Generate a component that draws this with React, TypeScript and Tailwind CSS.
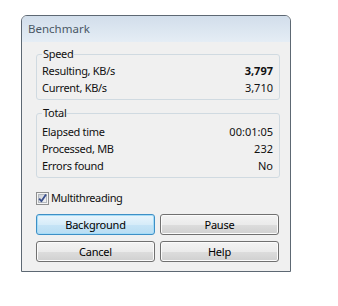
import type { ReactNode } from "react";

const font = { fontFamily: '"Noto Sans", "Open Sans", sans-serif' };

const Row = ({ label, value, bold }: { label: string; value: string; bold?: boolean }) => (
	<div className="flex items-center justify-between h-[17px]">
		<span className="tracking-[-0.3px]">{label}</span>
		<span className={bold ? "font-bold" : ""}>{value}</span>
	</div>
);

const Group = ({ title, children, className }: { title: string; children: ReactNode; className?: string }) => (
	<fieldset className={`border border-[#d0dae1] rounded-[3px] pl-[5px] pr-[6px] ${className ?? ""}`}>
		<legend className="px-[1px] leading-[16px] tracking-[-0.3px]">{title}</legend>
		{children}
	</fieldset>
);

const Button = ({ children, primary }: { children: ReactNode; primary?: boolean }) => (
	<button
		className={
			primary
				? "h-[21px] rounded-[3px] border border-[#3d8fc6] bg-[linear-gradient(#eaf5fc,#d6ecf9_50%,#c6e4f6_51%,#b9ddf3)] shadow-[inset_0_0_0_1px_#a6dcf7] text-black leading-none tracking-[-0.2px]"
				: "h-[21px] rounded-[3px] border border-[#707070] bg-[linear-gradient(#f3f3f3,#ebebeb_50%,#dddddd_51%,#d0d0d0)] shadow-[inset_0_0_0_1px_#fbfbfb] text-black leading-none tracking-[-0.2px]"
		}
	>
		{children}
	</button>
);

const CheckBox = () => (
	<svg width="13" height="13" viewBox="0 0 13 13">
		<defs>
			<linearGradient id="cb" x1="0" y1="0" x2="1" y2="1">
				<stop offset="0" stopColor="#cbcfd5" />
				<stop offset="1" stopColor="#f6f6f6" />
			</linearGradient>
		</defs>
		<rect x="0.5" y="0.5" width="12" height="12" fill="#f4f4f4" stroke="#8e8f8f" />
		<rect x="2.5" y="2.5" width="8" height="8" fill="url(#cb)" stroke="#b4b9bf" />
		<path d="M3.2 6.6 L5.4 9.3 L10 2.6" fill="none" stroke="#3a4f8c" strokeWidth="1.8" strokeLinejoin="round" />
	</svg>
);

export default function App() {
	return (
		<div className="min-h-screen bg-white pt-[15px] pl-[21px] text-[11px] text-[#111]" style={font}>
			<div className="w-[270px] h-[257px] flex flex-col border border-[#5d6873] rounded-t-[6px] bg-[#f0f0f0] overflow-hidden">
				{/* title bar */}
				<div className="h-[26px] shrink-0 flex items-center pl-[6px] bg-[linear-gradient(#d2deeb,#dde7f1_60%,#e5edf5)] text-[11.5px] text-[#4a5866]">
					Benchmark
				</div>

				<div className="flex flex-col pl-[14px] pr-[10px] pt-[4px]">
					<Group title="Speed" className="pt-[1px] pb-[2px]">
						<Row label="Resulting, KB/s" value="3,797" bold />
						<Row label="Current, KB/s" value="3,710" />
					</Group>

					<Group title="Total" className="mt-[5px] pt-[3px] pb-[1.5px]">
						<Row label="Elapsed time" value="00:01:05" />
						<Row label="Processed, MB" value="232" />
						<Row label="Errors found" value="No" />
					</Group>

					<label className="mt-[14px] flex items-center gap-[2px] h-[13px]">
						<CheckBox />
						<span className="tracking-[-0.4px]">Multithreading</span>
					</label>

					<div className="mt-[9px] grid grid-cols-2 gap-x-[5px] gap-y-[6px] w-[243px]">
						<Button primary>Background</Button>
						<Button>Pause</Button>
						<Button>Cancel</Button>
						<Button>Help</Button>
					</div>
				</div>
			</div>
		</div>
	);
}
